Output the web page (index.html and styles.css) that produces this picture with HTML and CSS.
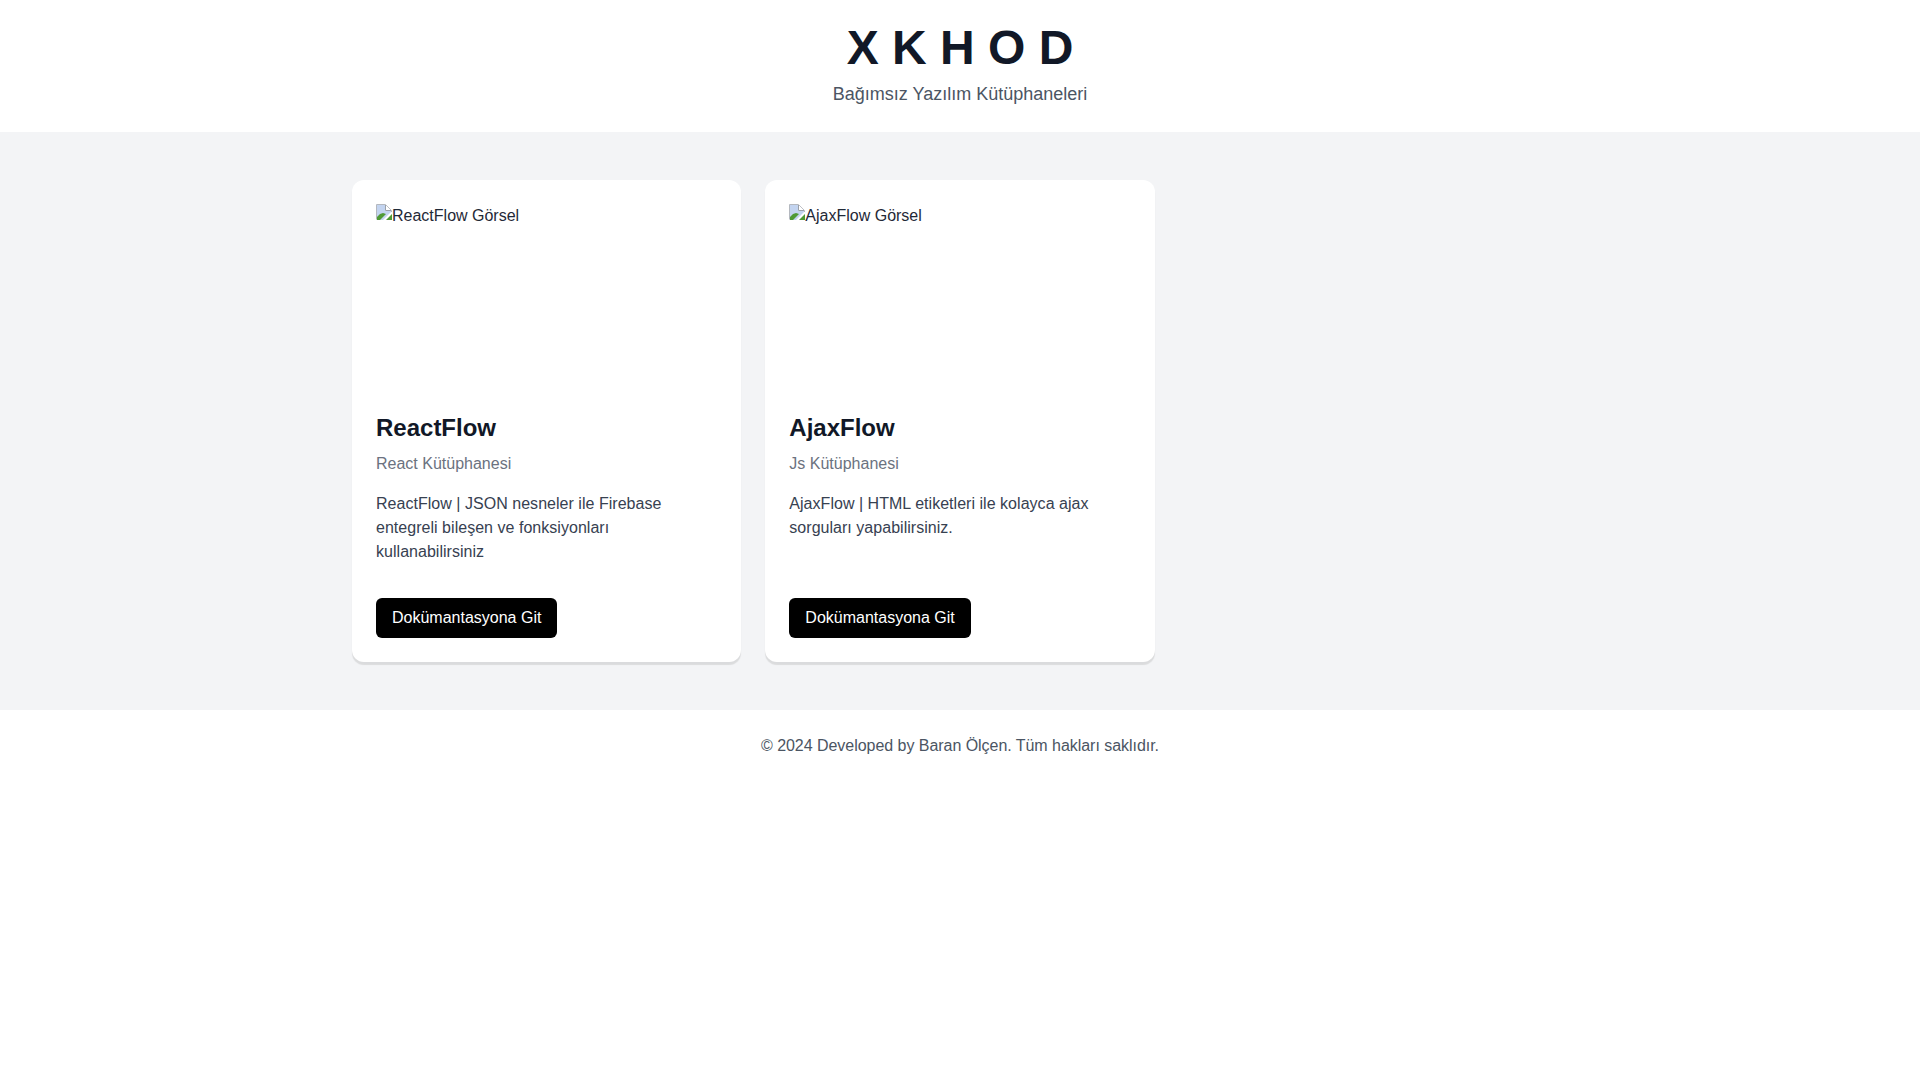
FILE: index.html
```html
<!DOCTYPE html>
<html lang="tr">

<head>
  <meta charset="UTF-8">
  <meta name="viewport" content="width=device-width, initial-scale=1.0">
  <title>XKHOD</title>
  <link rel="stylesheet" href="styles.css">
</head>

<body>
  <header class="site-header">
    <h1>X K H O D</h1>
    <p>Bağımsız Yazılım Kütüphaneleri</p>
  </header>

  <main class="site-main">
    <div class="card-grid">
      <article class="card">
        <div class="card-image">
          <svg class="broken-icon" width="16" height="16" viewBox="0 0 16 16" aria-hidden="true">
            <path d="M0.5 15.5V0.5H9.5L15.5 6.5V8" fill="none" stroke="#b4b8bf" />
            <path d="M1 1H9V7H15V8L7 16H1Z" fill="#c3d4f0" />
            <path d="M1 16V13L4 10L7 9L10 10L4 16Z" fill="#4f9a35" />
            <path d="M9.5 1V6.5H15" fill="#fff" stroke="#9aa0a8" />
            <path d="M10 16H16V10Z" fill="#4f9a35" />
          </svg>
          <span>ReactFlow Görsel</span>
        </div>
        <h2>ReactFlow</h2>
        <h3>React Kütüphanesi</h3>
        <p class="card-text">ReactFlow | JSON nesneler ile Firebase entegreli bileşen ve fonksiyonları kullanabilirsiniz</p>
        <a class="card-button" href="#">Dokümantasyona Git</a>
      </article>

      <article class="card">
        <div class="card-image">
          <svg class="broken-icon" width="16" height="16" viewBox="0 0 16 16" aria-hidden="true">
            <path d="M0.5 15.5V0.5H9.5L15.5 6.5V8" fill="none" stroke="#b4b8bf" />
            <path d="M1 1H9V7H15V8L7 16H1Z" fill="#c3d4f0" />
            <path d="M1 16V13L4 10L7 9L10 10L4 16Z" fill="#4f9a35" />
            <path d="M9.5 1V6.5H15" fill="#fff" stroke="#9aa0a8" />
            <path d="M10 16H16V10Z" fill="#4f9a35" />
          </svg>
          <span>AjaxFlow Görsel</span>
        </div>
        <h2>AjaxFlow</h2>
        <h3>Js Kütüphanesi</h3>
        <p class="card-text">AjaxFlow | HTML etiketleri ile kolayca ajax sorguları yapabilirsiniz.</p>
        <a class="card-button" href="#">Dokümantasyona Git</a>
      </article>
    </div>
  </main>

  <footer class="site-footer">
    <p>© 2024 Developed by Baran Ölçen. Tüm hakları saklıdır.</p>
  </footer>
</body>

</html>
```

FILE: styles.css
```css
* {
  box-sizing: border-box;
}

body {
  margin: 0;
  background-color: #fff;
  color: #1f2937;
  font-family: "Liberation Sans", Arial, sans-serif;
  font-size: 16px;
  line-height: 24px;
}

h1,
h2,
h3,
p {
  margin: 0;
}

.site-header {
  padding: 24px 0;
  text-align: center;
}

.site-header h1 {
  font-size: 48px;
  line-height: 48px;
  font-weight: 700;
  color: #111827;
}

.site-header p {
  margin-top: 8px;
  font-size: 18px;
  line-height: 28px;
  color: #4b5563;
}

.site-main {
  padding: 48px 0;
  background-color: #f3f4f6;
}

.card-grid {
  display: grid;
  grid-template-columns: repeat(3, 1fr);
  gap: 24px;
  max-width: 1280px;
  margin: 0 auto;
  padding: 0 32px;
}

.card {
  display: flex;
  flex-direction: column;
  align-items: flex-start;
  padding: 24px;
  background-color: #fff;
  border-radius: 12px;
  box-shadow: 0 3px 1px 0 rgba(0, 0, 0, 0.1);
}

.card-image {
  display: flex;
  align-items: flex-start;
  width: 100%;
  height: 192px;
  margin-bottom: 16px;
}

.card h2 {
  font-size: 24px;
  line-height: 32px;
  font-weight: 700;
  color: #111827;
}

.card h3 {
  margin-top: 8px;
  font-size: 16px;
  line-height: 24px;
  font-weight: 400;
  color: #6b7280;
}

.card-text {
  flex-grow: 1;
  margin-top: 16px;
  color: #374151;
  letter-spacing: 0.03px;
}

.card-button {
  margin-top: 34px;
  padding: 8px 16px;
  background-color: #000;
  border-radius: 6px;
  color: #fff;
  text-decoration: none;
}

.site-footer {
  padding: 24px 0;
  text-align: center;
  color: #4b5563;
  letter-spacing: -0.04px;
}
```
